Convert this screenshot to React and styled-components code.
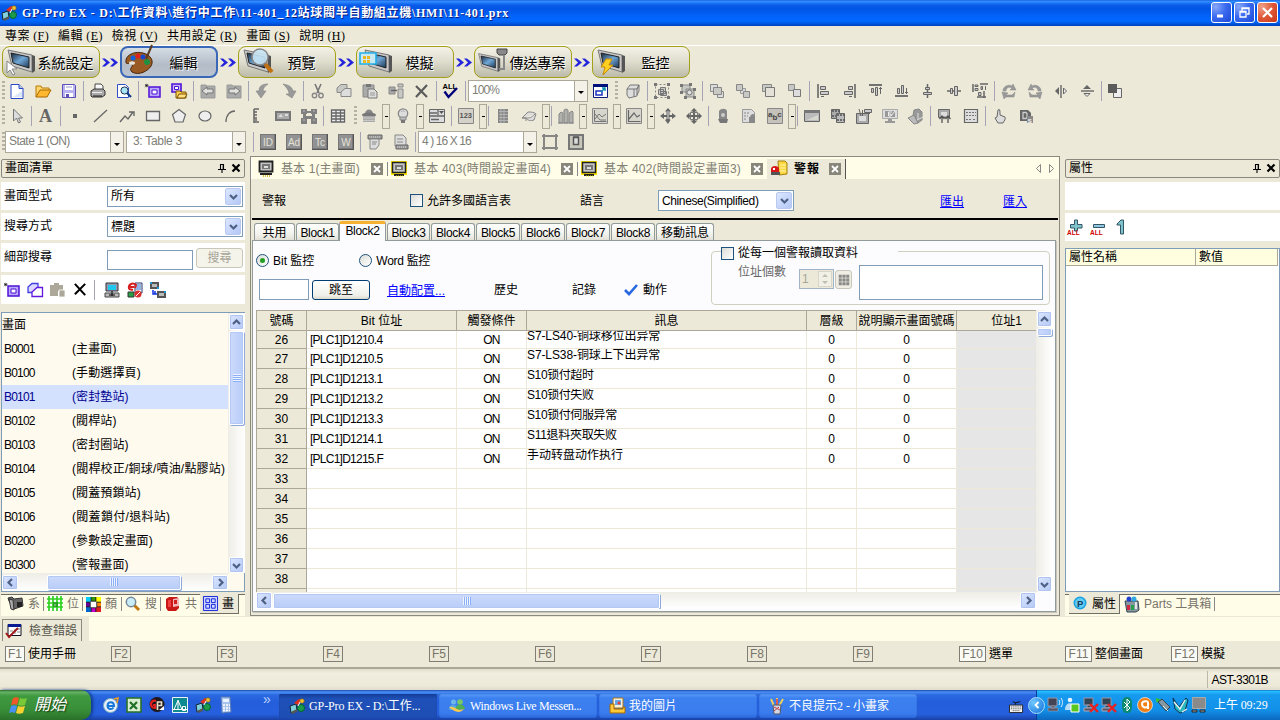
import React from "react";
import styled, { createGlobalStyle, css } from "styled-components";

const Global = createGlobalStyle`
  * { box-sizing: border-box; }
  body { margin: 0; overflow: hidden; }
`;
const sans = `"Liberation Sans", "Noto Sans CJK TC", sans-serif`;
const serif = `"Liberation Serif", "Noto Sans CJK TC", serif`;

const Screen = styled.div`
  width: 1280px; height: 720px; overflow: hidden; display: flex; flex-direction: column;
  background: #ece9d8; color: #000; font: 12px/14px ${sans}; white-space: nowrap;
`;
const Txt = styled.span`
  letter-spacing: ${p => p.$ls || 0}px;
  margin-left: ${p => p.$ml || 0}px;
  color: ${p => p.$c || "inherit"};
  font-weight: ${p => (p.$b ? 700 : 400)};
`;
const Svg = styled.svg`display: block; flex: none; overflow: visible;`;
const Spacer = styled.div`flex: ${p => (p.$w ? "none" : 1)}; width: ${p => p.$w || 0}px;`;

/* ---------- icon drawings, 16 x 16 ---------- */
const D = "#666", G = "#999", L = "#c8c8c4";
const hp = (
  <>
    <path d="M1 8l6-2 1 6-6 3z" fill="#7fd0d8" stroke="#123" />
    <path d="M2 14l6-3v3l-5 2z" fill="#555" />
    <path d="M5 5l5-4 3 1-4 5z" fill="#e03020" />
    <circle cx="12" cy="10" r="3.5" fill="#1d9a4a" stroke="#063" />
    <circle cx="13" cy="3" r="2.3" fill="#f0c030" stroke="#652" strokeWidth=".6" />
    <path d="M9 8l2-4" stroke="#fff" />
  </>
);
const badge = t => (
  <>
    <path d="M0 0h16v16H0z" fill="#777" /><path d="M1 1h13v13H1z" fill="#929292" />
    <path d="M0 15.5h16M15.5 0v16" stroke="#555" />
    <text x="8" y="12" fontSize="10" textAnchor="middle" fill="#e4e2d8" fontFamily="Liberation Sans">{t}</text>
  </>
);
const ICONS = {
  new: <><path d="M2 1.5h8l4 4v10H2z" fill="#fff" stroke="#2848c8" /><path d="M10 1.5v4h4" fill="#bcd" stroke="#2848c8" /><path d="M4 14h9V8z" fill="#dbe6fb" /></>,
  open: <><path d="M1 14V3h5l1 2h7v3" fill="#ffd76a" stroke="#b87808" /><path d="M1 14l4-7h11l-4 7z" fill="#ffb830" stroke="#a86800" /></>,
  save: <><path d="M1.5 1.5h12l1 1v12h-13z" fill="#b9b2f0" stroke="#5a50b8" /><path d="M4 2h8v5H4z" fill="#fff" /><path d="M4 10h8v4H4z" fill="#fff" /><path d="M5 11h3v3H5z" fill="#5a50b8" /><path d="M5 4h6" stroke="#99c" /></>,
  print: <><path d="M5 7V1h6l2 2v5" fill="#fff" stroke="#444" /><path d="M1 8l3-2h9l2 2v4l-3 2H2l-1-1z" fill="#aaa" stroke="#333" /><path d="M2 9.500h10M6 4h5" stroke="#eee" /><path d="M3 13h9" stroke="#222" /></>,
  preview: <><path d="M1.5 1.5h8l3 3v10h-11z" fill="#fff" stroke="#3050c8" /><circle cx="8.5" cy="7.5" r="3.6" fill="#a8e4f4" stroke="#235" /><path d="M11 10l4 4" stroke="#123a8a" strokeWidth="2.2" /></>,
  screen: <><path d="M4 4h11v10H4z" fill="#b8a8f8" stroke="#5010d8" strokeWidth="1.5" /><path d="M7 7h5v4H7z" fill="#fff" stroke="#5010d8" /><path d="M0 2.500h3.500M1.700.800v3.500M0 1l3 3M3.200 1L0 4.200" stroke="#111" strokeWidth=".6" /></>,
  screenopen: <><path d="M1 1h9v8H1z" fill="#c8b8f8" stroke="#5010d8" strokeWidth="1.600" /><path d="M3.500 3.500h4v3h-4z" fill="#fff" stroke="#5010d8" /><path d="M5 15V8h4l1 1h5v6z" fill="#ffcf50" stroke="#7a5200" /><path d="M6 15l2-4h8l-2 4z" fill="#ffdf80" stroke="#7a5200" /></>,
  prev: <><path d="M1 2h5l1 1h8v12H1z" fill="#aaa" stroke={G} /><path d="M2 8l5-4v2h6v4H7v2z" fill="#e0e0dc" stroke="#777" /></>,
  next: <><path d="M1 2h5l1 1h8v12H1z" fill="#aaa" stroke={G} /><path d="M14 8L9 4v2H3v4h6v2z" fill="#e0e0dc" stroke="#777" /></>,
  undo: <path d="M13 1C7 1 4 3 4 8H1l5 7 5-7H8c0-3 2-5 5-7z" fill={G} stroke="#858585" strokeWidth=".6" />,
  redo: <path d="M2 1c6 1 9 3 10 7h3l-4 7-6-4h3C8 7 5 4 2 1z" fill={G} stroke="#858585" strokeWidth=".6" />,
  cut: <><path d="M5 1l4 9M11 1L7 10" stroke="#777" strokeWidth="1.600" /><circle cx="4.500" cy="12.500" r="2.200" stroke="#888" strokeWidth="1.400" /><circle cx="11" cy="12.500" r="2.200" stroke="#888" strokeWidth="1.400" /></>,
  copy: <><path d="M5 1.500h6v8H1V5z" fill={L} stroke="#888" /><path d="M9 5.500h6v8H5V9z" fill="#ddd" stroke="#888" /></>,
  paste: <><path d="M1 2h11v12H1z" fill="#aaa" stroke="#888" /><path d="M4 1h5v3H4z" fill="#777" /><path d="M6 6h6l3 3v6H6z" fill="#ddd" stroke="#777" /><path d="M8 10h5M8 12h5" stroke="#999" /></>,
  move: <><path d="M1 4h6v7H1z" fill="#aaa" stroke="#888" /><path d="M10 6h5v9h-5zM10 1h5v3h-5z" fill={L} stroke="#888" /><path d="M3 7.500h6" stroke="#666" strokeWidth="1.500" /></>,
  x: <path d="M2 3l11 11M13 2L2 14" stroke="#5c5c5c" strokeWidth="2.200" />,
  xb: <path d="M2 2l11 12M13 2L2 13" stroke="#000" strokeWidth="2.200" />,
  allcheck: <><text x="-.5" y="5.500" fontSize="7.500" fontWeight="bold" fill="#000" fontFamily="Liberation Sans">ALL</text><path d="M1.500 8.500l4 5.500L14 5" stroke="#00007a" strokeWidth="2.400" /></>,
  window: <><path d="M.5 1.500h14v13H.5z" fill="#fff" stroke="#111a80" /><path d="M0 1h15v3H0z" fill="#00107a" /><path d="M3 8h6v4H3z" fill="#fff" stroke="#2030c0" strokeWidth="1.500" /><path d="M8 9l4-4M9 5h3v3" stroke="#1090b0" strokeWidth="1.500" /></>,
  cube: <path d="M2 6l3-4h9l-2 4v7l-8 2-2-3zM2 6h10M9 6v8M12 6l2-4v6l-2 4" fill="#ddd" stroke="#777" />,
  group: <><path d="M1.500 1.500h13v13h-13z" stroke="#888" strokeDasharray="2 2" /><path d="M4.500 6.500h5v5h-5zM6.500 4.500h5v6h-5zM6.500 8.500h6v4h-6z" fill={L} stroke="#777" /><path d="M0 0h3v3H0zM13 0h3v3h-3zM0 13h3v3H0zM13 13h3v3h-3z" fill="#777" /></>,
  ungroup: <><path d="M2 2h8v7H2zM6 6h8v8H6z" fill={L} stroke="#888" /><path d="M0 1h3v3H0zM9 0h3v3H9zM0 8h3v3H0zM13 5h3v3h-3zM4 13h3v3H4zM13 13h3v3h-3z" fill="#777" /><circle cx="9.500" cy="9.500" r="2.500" fill="#ddd" stroke="#777" /></>,
  front: <><path d="M1.500 1.500h7v7h-7z" fill="#ddd" stroke="#888" /><path d="M8.500 8.500h6v6h-6z" fill="#ddd" stroke="#888" /><path d="M4.500 4.500h8v7h-8z" fill={L} stroke="#888" /></>,
  forward: <><path d="M5.500 5.500h5v5h-5z" fill="#ddd" stroke="#999" /><path d="M1.500 1.500h6v6h-6zM8.500 8.500h6v6h-6z" fill={L} stroke="#888" /></>,
  backward: <><path d="M1.500 1.500h9v7h-9z" fill={L} stroke="#888" /><path d="M4.500 4.500h9v9h-9z" fill="#e4e2d8" stroke="#777" /></>,
  back: <><path d="M1.500 1.500h6v6h-6z" fill={L} stroke="#888" /><path d="M6.500 6.500h7v7h-7z" fill="#ddd" stroke="#777" /></>,
  alignL: <><path d="M2 1v14" stroke={D} strokeWidth="1.600" /><path d="M4.500 3.500h5v3h-5zM4.500 8.500h8v3h-8zM5 13.500h3" fill="#ccc" stroke={D} /></>,
  alignR: <><path d="M13 1v14" stroke={D} strokeWidth="1.600" /><path d="M6.500 3.500h4v3h-4zM2.500 8.500h8v3h-8zM7 13.500h3" fill="#ccc" stroke={D} /></>,
  alignT: <><path d="M1 2h13" stroke={D} strokeWidth="1.800" /><path d="M3.500 5.500h2v4h-2zM7.500 4.500h2v8h-2zM12.500 4v7M11 5.500h3" fill="#ccc" stroke={D} /></>,
  alignB: <><path d="M1 13h13" stroke={D} strokeWidth="1.800" /><path d="M3.500 5.500h2v5h-2zM7.500 2.500h2v8h-2zM12.500 5v6M11 9.500h3" fill="#ccc" stroke={D} /></>,
  alignC: <><path d="M7.500 1v14" stroke={D} strokeWidth="1.500" /><path d="M5.500 4.500h4v2h-4zM3.500 9.500h8v2h-8z" fill="#ccc" stroke={D} /></>,
  alignM: <><path d="M1 8h14" stroke={D} strokeWidth="1.500" /><path d="M4.500 5.500h2v5h-2zM8.500 3.500h3v9h-3z" fill="#ccc" stroke={D} /></>,
  alignA: <><path d="M1 1v8M8 1h8M5 14h9M12 8v7" stroke={D} strokeWidth="1.500" /><path d="M3 2h3v1.500H3zM3 5.500h3v2H3zM9 3.500h1.500v3H9zM13.500 3v4M6.500 9.500h2.500v3H6.500z" fill="#ccc" stroke={D} /></>,
  rotR: <path d="M2 8c0-5 6-7 9-5l1-2 3 6h-6l2-2C8 3 5 5 5 8zM1 9l6 1-2 2h6l3-3-1 5H5l-2 2z" fill={G} stroke="#888" strokeWidth=".5" />,
  rotL: <path d="M14 8c0-5-6-7-9-5L4 1 1 7h6L5 5c3-2 6 0 6 3zM15 9l-6 1 2 2H5L2 9l1 5h8l2 2z" fill={G} stroke="#888" strokeWidth=".5" />,
  flipH: <><path d="M6 4v8L2 8z" fill={D} /><path d="M8 2v13" stroke={D} strokeWidth="1.400" /><path d="M10.500 5v6l3-3z" fill="#eee" stroke={D} /></>,
  flipV: <><path d="M4 6h8L8 2z" fill={D} /><path d="M2 8h13" stroke={D} strokeWidth="1.400" /><path d="M5 10.500h6l-3 3z" fill="#eee" stroke={D} /></>,
  swap: <><path d="M5.500 5.500h8v9h-8z" fill="#eee" stroke={D} /><path d="M0 1h9v9H0z" fill="#5c5c5c" /></>,
  arrow: <path d="M4.500 1v12l3-3 2 5 2-1-2-4h4z" fill="#ddd" stroke="#777" />,
  A: <text x="1" y="14" fontSize="18" fontWeight="bold" fill={D} fontFamily="Liberation Serif">A</text>,
  dot: <path d="M6 6h4v4H6z" fill={D} />,
  line: <path d="M1 14L14 2" stroke={D} strokeWidth="1.300" />,
  poly: <path d="M1 14l5-6 3 3 5-7M10 4h5v4" stroke={D} strokeWidth="1.400" />,
  rect: <path d="M1.500 3.500h13v9h-13z" fill="#eee" stroke={D} strokeWidth="1.300" />,
  pent: <path d="M8 1.500l6.500 5L12 14H4L1.500 6.500z" fill="#eee" stroke={D} strokeWidth="1.200" />,
  ell: <ellipse cx="8" cy="8" rx="6" ry="5" fill="#eee" stroke={D} strokeWidth="1.200" />,
  arc: <path d="M3 14C3 7 7 3 12 3" stroke={D} strokeWidth="1.300" />,
  scale: <path d="M5 1v14M5 1h5M5 4h3M5 7h3M5 10h3M5 14h5M6 12h2" stroke={D} strokeWidth="1.500" />,
  image: <><path d="M0 3h16v10H0z" fill="#777" /><path d="M2 5h12v6H2z" fill="#aaa" /><path d="M3 9l3-3 2 3zM10 6h3v2h-3z" fill="#ddd" /></>,
  layout: <><path d="M0 1h6v5H0zM10 1h6v5h-6zM0 10h6v6H0zM10 10h6v6h-6zM6 3h4v2H6zM2 6h3v4H2zM11 6h3v4h-3zM5 8h6v3H5z" fill="#808080" /><path d="M2 3h2M12 3h2M2 12h2M12 12h2" stroke="#bbb" /></>,
  table: <path d="M1.500 2h13v12h-13zM1.500 5h13M1.500 8h13M1.500 11h13M6 2v12M10.500 2v12" fill="#eee" stroke={D} strokeWidth="1.300" />,
  lamp: <><path d="M4 6c0-6 8-6 8 0z" fill="#888" /><ellipse cx="8" cy="7" rx="7" ry="2.500" fill="#777" /><path d="M2 8h12v6H2z" fill="#aaa" /><path d="M2 10h12M2 12.500h12" stroke={L} /></>,
  bulb: <><circle cx="8" cy="5.500" r="4.700" fill="#ddd" stroke="#888" strokeWidth="1.300" /><path d="M5 9h6v3H5z" fill="#bbb" stroke="#888" /><path d="M6 12h4v3H6z" fill="#777" /><path d="M6 4c2-2 3-1 4 0" stroke="#aaa" /></>,
  panel: <><path d="M.5 1.500h15v13H.5z" fill="#ddd" stroke={D} /><path d="M0 8h16M0 5h8M2 11.500h8M9 2v5" stroke={D} strokeWidth="1.300" /><path d="M10 3h5l-2.500 3z" fill="#555" /></>,
  n123: <><path d="M.5.500h15v15H.5z" fill="#d4d2c8" stroke="#888" /><text x="1.500" y="9.500" fontSize="7.500" fontWeight="bold" fill="#555" fontFamily="Liberation Sans">123</text></>,
  keypad: <><path d="M3 1h10v14H3z" fill="#888" /><path d="M4 3.500h9M4 6.500h9M4 9.500h9M4 12.500h9M6 1v14M9 1v14" stroke="#bbb" strokeWidth=".8" /></>,
  shape3: <path d="M1 10l6-6c3 0 6 0 8 2l-2 6c-3 1-6 1-8-2zM1 10h4c4 0 5 0 9-4M5 10v3" fill="#ddd" stroke="#888" />,
  bars: <><path d="M1 6l2-2 2 1v10H1zM6 2l2-1 2 1v13H6zM11 5l3-2 1 1v11h-4z" fill="#b0b0ac" stroke="#888" /><path d="M0 15h16" stroke="#888" /></>,
  graph: <><path d="M.5.500h15v15H.5z" fill="#d8d6cc" stroke="#888" /><path d="M2.500 2v11.500h12M3 11l4-5 3 3 4-3M3 6l5 6h6" stroke="#777" /></>,
  graph2: <><path d="M.5.500h15v15H.5z" fill="#d8d6cc" stroke="#888" /><path d="M2.500 2v11.500h12M3 11l5-6 3 4 3-2" stroke={D} strokeWidth="1.200" /></>,
  dia1: <><path d="M8 0l3 3.500H9.500V7H12V5l4 3-4 3V9H9.500v2l1 1L8 16l-3-4 1.500-1V9H4v2L0 8l4-3v2h2.500V3.500H5z" fill={D} /><path d="M8 3v8" stroke="#ddd" /></>,
  dia2: <><path d="M8 0l3.500 3.500H9V7h3.500V4.500L16 8l-3.500 3.500V9H9v3.500h2.500L8 16l-3.500-3.500H7V9H3.500v2.500L0 8l3.500-3.500V7H7V3.500H4.500z" fill={D} /><path d="M4.500 4.500h7v7h-7z" stroke="#777" /></>,
  alarm: <><path d="M4 3c2-3 7-3 8 0v8H4z" fill="#888" /><circle cx="8" cy="7" r="2" fill="#ccc" /><path d="M3 11h10l-1 4H5z" fill="#777" /></>,
  doc: <><path d="M1.500 1.500h9l3 3v10h-12z" fill="#ddd" stroke="#999" /><path d="M3 5h6M3 8h4M3 11h3" stroke="#888" strokeDasharray="2 1" /><path d="M9 9c1-4 5-4 5 0v6H8V9z" fill="#888" /></>,
  abc: <><path d="M.5.500h15v15H.5z" fill="#c4c2ba" stroke="#888" /><text x="1" y="8.500" fontSize="8" fontWeight="bold" fill="#444" fontFamily="Liberation Sans">a<tspan dy="3">b</tspan><tspan dy="-3">c</tspan></text></>,
  win2: <><path d="M.5 2.500h15v11H.5z" fill="#bbb" stroke={D} /><path d="M0 2h16v3H0z" fill="#777" /><path d="M3 12h11V7z" fill="#d8d8d0" /></>,
  film: <><path d="M1.500 1.500h8v9h-8z" fill="#aaa" stroke={D} /><path d="M6.500 5.500h8v9h-8z" fill="#bbb" stroke={D} /><path d="M2 3h8M2 8h4M7 7h8M7 12h8" stroke="#555" strokeDasharray="2 1" strokeWidth="1.500" /></>,
  grp: <><path d="M.5 5.500h12v10H.5z" fill="#aaa" stroke={D} /><path d="M3 8h7v5H3z" fill="#ddd" /><path d="M3 1l2 7M8.500 1.500h7v3h-7zM6 5.500h8M6.500 2v6" fill="#ccc" stroke={D} /></>,
  monitor: <><path d="M.5 1.500h15v9H.5z" fill="#ddd" stroke="#aaa" /><path d="M3 3h10v6H3z" fill="#999" /><path d="M10 4H6.500v4H9V6H7M13 3L9 8" stroke="#eee" /><path d="M6 11h4v2H6zM3 13h10v2H3z" fill="#999" /></>,
  box3: <><path d="M6 2l5-1 3 3v8l-4 3-6-2z" fill="#999" stroke="#888" /><path d="M0 10l6-3 4 8-4 1z" fill="#bbb" stroke="#888" /><path d="M10 5v6M9 12l6-3" stroke="#ddd" /></>,
  send: <><path d="M1.500 1.500h11v8h-11z" fill="#aaa" stroke={D} /><path d="M4 4h6v4H4z" fill="#ddd" /><path d="M5 15V8M11 15V8M2.500 11L5 8l2.500 3M8.500 11L11 8l2.500 3" stroke="#555" strokeWidth="1.300" /></>,
  text: <><path d="M1.500 1.500h13v13h-13z" fill="#ddd" stroke={D} strokeWidth="1.200" /><path d="M3 4.500h10M3 7.500h10M3 11.500h6M10 11.500h3" stroke="#777" strokeDasharray="2 1" strokeWidth="1.200" /></>,
  hand: <path d="M6 2c2-2 2 1 2 5l5 2c1 2-1 4-2 6H6L3 10l2-1z" fill="#ddd" stroke={D} />,
  ds: <><path d="M2 2h8l3 3v8H2z" fill="#666" /><path d="M5 4.500h3l1 1v4l-1 1H5z" stroke="#ccc" strokeWidth="1.300" /><path d="M9 8h6v7H9z" fill="#888" /><text x="9.500" y="14.500" fontSize="8" fontWeight="bold" fill="#eee" fontFamily="Liberation Sans">s</text></>,
  id: badge("ID"), ad: badge("Ad"), tc: badge("Tc"), w: badge("W"),
  fmt1: <><path d="M1 1h14v4H1z" fill="#999" stroke={D} /><path d="M2 3h12" stroke="#ddd" strokeDasharray="1 1" /><path d="M3 5h9v6l-3 4H3zM5 8h5M5 10h4" fill="#ddd" stroke="#888" /></>,
  fmt2: <><path d="M2 1h8l3 3v8H2zM4 5h6M4 8h6" fill="#ddd" stroke="#888" /><path d="M3 11h12v4H3z" fill="#999" stroke={D} /><path d="M4 13h10" stroke="#ddd" strokeDasharray="1 1" /></>,
  frame: <><path d="M0 2h16M0 14h16M2 0v16M14 0v16" stroke={D} strokeWidth="1.500" /><path d="M1 1h2v2H1zM13 1h2v2h-2zM1 13h2v2H1zM13 13h2v2h-2z" fill="#888" /></>,
  frame2: <><path d="M0 0h16v16H0z" fill="#777" /><path d="M2 2h3v12H2zM2 11h12v3H2zM11 2h3v10h-3z" fill="#c9c7bc" /><path d="M5.500 3.500h5v7h-5z" fill="#ddd" stroke="#555" strokeWidth="1.500" /></>,
  copyb: <><path d="M5 1.500h6v9H1V5z" fill="#dcd8ff" stroke="#4040e0" strokeWidth="1.300" /><path d="M10 5.500h5.500v9H5V10z" fill="#fff" stroke="#6018e0" strokeWidth="1.300" /></>,
  pasteg: <><path d="M0 3h4V1h5v2h4v6H8v5H0z" fill="#aca899" /><path d="M9 8h6v7H9z" fill="#aca899" stroke="#fff" strokeWidth=".8" /></>,
  pc: <><path d="M2 1h12v8H2z" fill="#99a" stroke="#334" /><path d="M4 3h8v5H4z" fill="#20c8f0" /><path d="M1 11h14v4H1z" fill="#bbb" stroke="#444" /><path d="M8 9v5M5 13h6" stroke="#000" /></>,
  recipe: <><path d="M8 1h7v10H8z" fill="#fff" stroke="#236" /><path d="M9 3h5M9 5h5M9 7h5" stroke="#26c" /><path d="M2 7c-1-5 4-7 7-4L8 6M2 7l4 1M1 5h6" stroke="#d82020" strokeWidth="2" /><path d="M1 10h6v5H1z" fill="#28a048" stroke="#333" /><circle cx="11" cy="12" r="3.500" fill="#d83030" /><path d="M9 14l4-4" stroke="#fff" /></>,
  link: <><path d="M0 0h9v7H0z" fill="#555" /><path d="M2 2h5v3H2z" fill="#bbb" /><path d="M7 9h9v7H7z" fill="#555" /><path d="M9 11h5v3H9z" fill="#bbb" /><path d="M3 8v4h4M5 9v3" stroke="#1030e0" strokeWidth="1.500" /><path d="M0 0h2v2H0zM7 5h2v2H7zM14 9h2v2h-2z" fill="#2098d8" /></>,
  camera: <><path d="M0 2l4-1 2 2 8-1 1 8-9 3-5-8z" fill="#666" stroke="#333" /><path d="M1 3l4 1 1 10-3-1z" fill="#aaa" stroke="#333" /><path d="M9 6h5v5H9z" fill="#222" /></>,
  gridg: <><path d="M0 0h16v15H0z" fill="#fff" /><path d="M2 0v15M6 0v15M10 0v15M14 0v15M0 3h16M0 7h16M0 11h16" stroke="#30d020" strokeWidth="1.700" /><path d="M6 6h5v5H6z" fill="#108010" opacity=".6" /></>,
  colors: <><path d="M0 0h16v16H0z" fill="#222" /><path d="M0 0h5v5H0z" fill="#0cf" /><path d="M6 0h4v4H6z" fill="#390" /><path d="M11 0h5v5h-5z" fill="#ff0" /><path d="M0 6h4v4H0z" fill="#609" /><path d="M5 5h6v6H5z" fill="#fff" /><path d="M12 6h4v4h-4z" fill="#f80" /><path d="M0 11h5v5H0z" fill="#06c" /><path d="M6 12h4v4H6z" fill="#c0c" /><path d="M11 11h5v5h-5z" fill="#e02020" /></>,
  search: <><path d="M9 9l5 5" stroke="#c07810" strokeWidth="3" /><circle cx="6" cy="6" r="4.700" fill="#c8ecf8" stroke="#789" strokeWidth="1.500" /></>,
  redbox: <><path d="M1 3l3-2h8l2 2v9l-3 3H3l-2-3z" fill="#c81818" /><path d="M8 3l6-1v8l-6 1z" fill="#f4b8b8" /><path d="M3 4h3v7H3z" fill="#f04040" /><path d="M9 4h3v4H9z" fill="#d02020" /></>,
  tiles: <><path d="M.5.500h15v15H.5z" fill="#d0d8ff" stroke="#1020d8" /><path d="M3 3h4v4H3zM9 3h4v4H9zM3 9h4v4H3zM9 9h4v4H9z" stroke="#1020d8" /></>,
  chk: <><path d="M2 1.500h13v11H2z" fill="#fff" stroke="#112" /><path d="M2 1h13v3H2z" fill="#0a1a90" /><path d="M4 8h3M9 6v5M11 6h3M11 9h3" stroke="#888" /><path d="M0 10l3 4 9-9" stroke="#a01818" strokeWidth="1.900" /></>,
  disp: <><path d="M0 0h16v14H0z" fill="#ffe800" /><path d="M1.500 1.500h13v10h-13z" fill="#c4c4c4" stroke="#222" strokeWidth="1.500" /><path d="M4 4h8v5H4z" fill="#777" /><path d="M6 6h4v2H6z" fill="#ddd" /><path d="M3 14h10" stroke="#222" strokeWidth="2" /><path d="M5 15h7" stroke="#ffe800" strokeDasharray="1 1" /></>,
  dispg: <><path d="M1.500.500h13v10h-13z" fill="#c4c4c4" stroke="#222" strokeWidth="1.800" /><path d="M4 3h8v5H4z" fill="#777" /><path d="M6 5h4v2H6z" fill="#ddd" /><path d="M2 13h12" stroke="#222" strokeWidth="2" /><path d="M5 15h7" stroke="#d8a810" strokeDasharray="1 1" strokeWidth="1.500" /></>,
  alarmc: <><path d="M7 0h7l2 2v11l-8 1z" fill="#ffd840" stroke="#a08010" /><path d="M9 4h6M9 7h6M9 10h6" stroke="#fff4b0" /><path d="M0 8c0-4 8-4 8 0v3H0z" fill="#d81818" /><path d="M0 11h9v3H0z" fill="#555" /><path d="M2 7h2v2H2z" fill="#fff" /></>,
  plus: <><path d="M7.500 1h3v4.500H15V9h-4.500v3h-3V9H3.500V5.500h4z" fill="#7fc4cc" stroke="#356" /><text x="0" y="15.500" fontSize="6.500" fontWeight="bold" fill="#d00000" fontFamily="Liberation Sans">ALL</text></>,
  minus: <><path d="M3.500 5.500h11v3h-11z" fill="#8fc8e0" stroke="#356" /><text x="0" y="15.500" fontSize="6.500" fontWeight="bold" fill="#d00000" fontFamily="Liberation Sans">ALL</text></>,
  one: <path d="M4 5l4-4h2.500v14h-3V6H4z" fill="#7fc4cc" stroke="#356" />,
  prop: <><circle cx="7" cy="7" r="6.500" fill="#18a0e0" /><circle cx="7" cy="7" r="5" fill="#60ccf4" /><text x="4" y="10.500" fontSize="9.500" fontWeight="bold" fill="#1a4060" fontFamily="Liberation Sans">P</text><text x="3.500" y="10" fontSize="9.500" fontWeight="bold" fill="#ffffc8" aria-hidden="true" fontFamily="Liberation Sans" /></>,
  parts: <><path d="M1 5h13l1 9-3 2H3z" fill="#8898a0" stroke="#345" /><circle cx="5" cy="3" r="2.500" fill="#2040d0" /><circle cx="10" cy="3" r="2.500" fill="#30a8e0" /><path d="M3 9h3v5H3z" fill="#d02840" /><path d="M7 9h3v5H7z" fill="#28a050" /><path d="M12 6v7" stroke="#fff" strokeWidth="1.500" /></>,
  hp,
  ie: <><circle cx="7.500" cy="8.500" r="7" fill="#e8f0fa" stroke="#7ab" /><path d="M4 9h7c0-5-6-5-6.500-.5 0 4 4 4.500 6 2" stroke="#1878d8" strokeWidth="2" /><path d="M11 2l4-1-1 5" stroke="#f0a020" strokeWidth="1.600" /></>,
  excel: <><path d="M1 1h14v14H1z" fill="#d8ecd0" stroke="#287028" strokeWidth="1.600" /><path d="M4 5l7 7M11 5l-7 7" stroke="#207028" strokeWidth="2.200" /></>,
  gp: <><circle cx="8" cy="7.500" r="7.500" fill="#201818" /><path d="M7 4C1 2 0 11 6 11V8H4" stroke="#e02020" strokeWidth="2.200" /><path d="M8.500 13V5h4v3.500h-3" stroke="#e8e0c8" strokeWidth="1.700" /><path d="M10 13l5-4v4z" fill="#fff" /></>,
  cad: <><path d="M.5.500h15v15H.5z" fill="#0d8a90" stroke="#e8f4f4" /><path d="M2 12.500l4-9 4 9zM6 3v9M10.500 9.500h3v4h-3zM1 12.500h14" stroke="#fff" /></>,
  calc: <><path d="M3 0h9l1 15-9 1z" fill="#a8c4ec" stroke="#5878b8" /><path d="M5 2h6v3H5z" fill="#e8f4ff" /><path d="M5 8h7M5 11h7M5 13.500h7" stroke="#fff" strokeDasharray="2 1" strokeWidth="1.500" /></>,
  msn: <><circle cx="4.500" cy="4" r="2.500" fill="#70b8e8" /><circle cx="11" cy="4" r="2.800" fill="#78c868" /><path d="M0 12c0-7 8-7 9 0z" fill="#58a8e0" /><path d="M6 12c1-7 9-7 10-1z" fill="#50b050" /><path d="M0 9c6-2 8 5 15 2-4 5-10 3-15-2z" fill="#f8c850" /></>,
  pics: <><path d="M4 0h10v10H4z" fill="#f8f0d8" stroke="#a07820" /><path d="M6 2h6v5H6z" fill="#68a8e8" /><path d="M1 6h4v5h9V9h2v6H1z" fill="#ffc838" stroke="#a06808" /><circle cx="10" cy="5" r="1.500" fill="#e04030" /></>,
  paint: <><path d="M5 8L2 1M8 8V0M10 8l4-7" stroke="#e8d060" strokeWidth="2" /><path d="M8 8V1" stroke="#e04040" strokeWidth="1.600" /><path d="M4 7h8l-1 9H5z" fill="#d0d8e8" stroke="#556" /><path d="M5 9l6 3M5 13l5-4" stroke="#c84040" /></>,
  kbd: <><path d="M.5 7.500h14v8H.5z" fill="#f4f4f4" stroke="#222" /><path d="M2 9.500h11M2 11.500h11M4 13.500h7" stroke="#333" strokeDasharray="1 1" /><path d="M7 7V5L4 4M7 5l5-1" stroke="#111" /></>,
  net: <><path d="M1 1h9v8H1z" fill="#445" stroke="#99a" /><path d="M4 9h4v2H4zM1 11h10v3H1z" fill="#556" stroke="#aab" strokeWidth=".5" /><path d="M12 3c1 2 1 3 0 5M14 1c2 3 2 6 0 9" stroke="#e8f4ff" /></>,
  user: <><circle cx="5" cy="3" r="2.300" fill="#eaf6ff" /><path d="M0 13c0-9 9-9 10 0z" fill="#b8ddf4" /><path d="M6 7h8v8H6z" fill="#58c820" stroke="#fff" /></>,
  netx: <><path d="M1 1h9v7H1zM4 8h4v3H4z" fill="#345" stroke="#99a" /><path d="M1 11h9v3H1z" fill="#556" stroke="#aab" /><path d="M7 7l8 8M15 7l-8 8" stroke="#e82020" strokeWidth="2.400" /></>,
  bt: <><path d="M8 0c4 0 5 3 5 8s-1 8-5 8-5-3-5-8 1-8 5-8z" fill="#0a8a70" /><path d="M5 5l6 6-3 3V2l3 3-6 6" stroke="#fff" /></>,
  avast: <><circle cx="8" cy="8" r="7.500" fill="#f08018" stroke="#fff" strokeWidth=".6" /><path d="M11 12V6c0-3-6-2-6 1s4 5 6 2" stroke="#fff" strokeWidth="2" /></>,
  usb: <><path d="M1 1l6 2-1 3-5-1z" fill="#38c038" /><path d="M3 5l4-3 8 8-4 4z" fill="#8898a0" stroke="#345" /><path d="M8 9l5 5" stroke="#dfe" /></>,
  bird: <><path d="M0 1l6 9L13 1l2 2-3 11-5 2-5-4z" fill="#28b8c0" stroke="#135" /><path d="M1 5l6 7L12 3M14 12l-5 3" stroke="#eee" strokeWidth="1.300" /></>,
  mon2: <><path d="M1.500.500h13v11h-13z" fill="#8a8a8a" stroke="#aaa" /><path d="M1 13h5v2H1zM9 13h5v2H9z" fill="#999" stroke="#111" strokeWidth=".8" /></>,
  grid: <><path d="M1 1h14v14H1z" fill="#888" /><path d="M1 5.500h14M1 10.500h14M5.500 1v14M10.500 1v14" stroke="#e4e2d8" /></>,
};
const Icon = ({ n, s = 16 }) => (
  <Svg width={s} height={s} viewBox="0 0 16 16" fill="none">{ICONS[n]}</Svg>
);

/* ---------- title bar / menu ---------- */
const TitleBar = styled.header`
  height: 26px; flex: none; display: flex; align-items: center; padding: 0 2px 1px 1px; color: #fff;
  font: bold 12px/16px ${serif}; text-shadow: 1px 1px #0a1c80;
  background: linear-gradient(#0a50d8 0, #3a92ff 1px, #2a86ff 2px, #0a5ce8 5px, #0055e5 9px, #0262fa 16px, #0068ff 21px, #0054dc 24px, #0040b8 26px);
`;
const WinBtn = styled.div`
  width: 21px; height: 21px; margin-left: 2px; border: 1px solid #fff; border-radius: 3px;
  display: grid; place-items: center;
  background: ${p => p.$red ? "radial-gradient(circle at 20% 20%, #f0a088, #e05838 50%, #c83818)" : "radial-gradient(circle at 20% 20%, #8aa8f8, #3c6cf0 45%, #1c48d8)"};
`;
const MenuBar = styled.nav`
  height: 20px; flex: none; display: flex; align-items: center; padding-left: 5px; gap: 9px;
  border-bottom: 1px solid #fff; font-family: ${serif}; letter-spacing: .4px;
`;
const menus = [["專案", "F"], ["編輯", "E"], ["檢視", "V"], ["共用設定", "R"], ["畫面", "S"], ["說明", "H"]];

/* ---------- mode buttons ---------- */
const ModeBar = styled.div`height: 32px; flex: none; display: flex; align-items: center; padding-left: 2px;`;
const ModeButton = styled.div`
  width: 98px; height: 32px; display: flex; align-items: center; padding-left: 3px;
  border: ${p => (p.$on ? "2px solid #3a68b8" : "1px solid #a4a018")}; border-radius: 8px;
  background: ${p => p.$on ? "linear-gradient(#d4dce4, #b4bcc8 60%, #bcc4d0)" : "linear-gradient(#f4f2e8, #dedccc 50%, #bcbaa8)"};
`;
const ModeLabel = styled.div`flex: 1; text-align: center; font-size: 14px; line-height: 18px; text-shadow: 1px 1px #fff; padding: 2px 3px 0 0; margin-left: -2px;`;
const Chevrons = styled.div`width: 20px; display: grid; place-items: center;`;
const device = (
  <>
    <path d="M2 2l24 5v17L6 18z" fill="#c8c8c8" stroke="#777" /><path d="M26 7l3 1v15l-3 2z" fill="#555" />
    <path d="M5 5l18 4v11L7 15z" fill="url(#glass)" stroke="#222" />
  </>
);
const MODE_ART = {
  sys: <>{device}<path d="M1 13v12l3-3 3 5 2-1-3-5h5z" fill="#fff" stroke="#888" /></>,
  edit: <><path d="M1 12C2 6 11 3 18 5c8 2 11 8 8 13S14 28 7 24c-4-4 2-5 0-8-3-2-7 2-6-4z" fill="#9a5a24" stroke="#4a2408" /><circle cx="8" cy="10" r="2.500" fill="#1060e0" /><circle cx="13" cy="8" r="2.500" fill="#e02020" /><circle cx="18" cy="9" r="2.500" fill="#1848d0" /><circle cx="22" cy="14" r="3" fill="#209040" /><path d="M21 11l6-14" stroke="#5a3a20" strokeWidth="2" /><ellipse cx="7" cy="15" rx="3" ry="1.800" fill="#e8e4d8" /></>,
  view: <>{device}<path d="M23 16l7 8" stroke="#c07010" strokeWidth="4" /><circle cx="18" cy="9" r="8" fill="#c8e4f4" fillOpacity=".9" stroke="#888" strokeWidth="1.500" /></>,
  sim: <><g transform="translate(3 0)">{device}</g><path d="M0 5h16v11H0z" fill="#c8e8f4" stroke="#20b0e8" strokeWidth="1.600" /><path d="M3 8h3v3H3zM7 8h3v3H7zM3 12h3v3H3zM7 12h3v3H7z" fill="#f0b820" /></>,
  send: <><g transform="translate(-1 4) scale(.8)">{device}</g><path d="M19 1h10v4l-2 2h-6l-2-2z" fill="#888" stroke="#444" /><path d="M26 7v14h-5" stroke="#888" strokeWidth="2" /></>,
  mon: <>{device}<path d="M10 11h6l-3 6h4L7 27l2-8H5z" fill="#ffd020" stroke="#c88808" /></>,
};
const modes = [["sys", "系統設定"], ["edit", "編輯", 1], ["view", "預覽"], ["sim", "模擬"], ["send", "傳送專案"], ["mon", "監控"]];

/* ---------- tool rows ---------- */
const ToolRow = styled.div`height: ${p => p.$h || 26}px; flex: none; display: flex; align-items: center; padding-left: 2px;`;
const Tool = styled.div`margin-left: 10px;`;
const Grip = styled.div`width: 3px; height: 20px; background: repeating-linear-gradient(#b4b1a4 0 2px, #ece9d8 2px 4px); & + ${Tool} { margin-left: ${p => p.$a || 4}px; }`;
const Sep = styled.div`width: 1px; height: 20px; margin-left: 6px; background: #a6a4b4; & + ${Tool} { margin-left: 6px; }`;
const Drop = styled.div`
  width: 8px; height: 25px; margin-left: 5px; border: 1px solid #aca899; display: grid; place-items: center;
  &::after { content: ""; width: 3px; height: 1px; background: #000; border-bottom: 0; }
  & + ${Tool} { margin-left: 5px; } & + ${Sep} { margin-left: 1px; }
`;
const Combo = styled.div`
  width: ${p => p.$w}px; height: 22px; margin-left: ${p => p.$ml || 0}px; display: flex; justify-content: space-between; align-items: stretch;
  border: 1px solid #aca899; background: #fff; color: #808078; line-height: 19px; padding-left: 3px;
  & + ${Tool} { margin-left: 5px; }
`;
const ComboArrow = styled.div`
  width: 13px; background: #f4f2e8; border-left: 1px solid #aca899; display: grid; place-items: center;
  &::after { content: ""; border: 3px solid transparent; border-top-color: #000; border-bottom: 0; margin-top: 4px; }
`;
const tools = s => s.split(" ").map((t, i) =>
  t === "|" ? <Sep key={i} /> : t === "v" ? <Drop key={i} /> : <Tool key={i}><Icon n={t} /></Tool>);

/* ---------- docks ---------- */
const Main = styled.main`height: 462px; flex: none; display: flex;`;
const Dock = styled.aside`width: ${p => p.$w}px; padding: ${p => p.$p}; display: flex; flex-direction: column;`;
const DockHead = styled.div`
  height: 19px; flex: none; border: 1px solid #8a887c; border-radius: 2px; display: flex; align-items: center; padding: 0 4px 1px 3px; margin-bottom: 4px;
`;
const WhiteBar = styled.div`height: ${p => p.$h}px; flex: none; margin-bottom: 3px; background: #fff; display: flex; align-items: center; padding-left: ${p => p.$pl ?? 4}px;`;
const FieldLabel = styled.div`width: 102px; padding-bottom: 1px; margin-left: -1px; margin-right: 1px;`;
const Select = styled.div`
  width: ${p => p.$w}px; height: 21px; background: #fff; border: 1px solid #7f9db9; display: flex; align-items: center; justify-content: space-between; padding: 1px 1px 1px 3px;
`;
const Btn = styled.div`
  display: grid; place-items: center; width: ${p => p.$w || 16}px; height: ${p => p.$h || 17}px; flex: none; border-radius: 2px;
  background: linear-gradient(135deg, #dce6ff, #b4c8f6); border: 1px solid ${p => (p.$out ? "#fff" : "#b8c8f0")}; box-shadow: ${p => (p.$out ? "inset 0 0 0 1px #b0c4f0" : "none")};
`;
const Arrow = ({ r = 0 }) => (
  <Svg width="9" height="9" viewBox="0 0 9 9"><path d="M1 3l3.500 3.500L8 3" transform={`rotate(${r} 4.500 4.500)`} fill="none" stroke="#4d6185" strokeWidth="2.200" /></Svg>
);
const Input = styled.div`width: ${p => p.$w}px; height: ${p => p.$h || 21}px; flex: none; border: 1px solid #7f9db9; background: #fff; margin-top: ${p => p.$mt || 0}px;`;
const GrayBtn = styled.div`
  width: 47px; height: 20px; margin-left: 3px; border: 1px solid #c9c7ba; border-radius: 3px; background: #f5f4ea; color: #a6a498; display: grid; place-items: center; font-size: 12px;
`;
const ListBox = styled.div`height: 280px; flex: none; margin-top: 5px; border: 1px solid #7f9db9; background: #fffaee; display: grid; grid-template: 260px 18px / 226px 17px;`;
const ListRows = styled.div`overflow: hidden;`;
const ListRow = styled.div`
  height: 24px; display: flex; align-items: center; padding-left: 2px;
  ${p => p.$on && css`background: #d3e1ff; color: #000090;`}
`;
const Code = styled.div`width: 68px; letter-spacing: -.8px;`;
const VBar = styled.div`width: 17px; background: linear-gradient(90deg, #eeede6, #fff); display: flex; flex-direction: column; align-items: center; padding-top: 1px; justify-content: space-between;`;
const HBar = styled.div`background: linear-gradient(#eeede6, #fff); display: flex; align-items: center; justify-content: space-between; overflow: hidden;`;
const Thumb = styled.div`
  flex: none; width: ${p => p.$w}px; height: ${p => p.$h}px; margin: ${p => p.$m || 0}; border: 1px solid #fff; border-radius: 2px; display: grid; place-items: center;
  background: linear-gradient(${p => (p.$v ? "90deg" : "180deg")}, #cddafc, #b8cdf8); box-shadow: inset 0 0 0 1px #b4c8f4, 1px 1px #8ea8dc;
  &::after { content: ""; width: 8px; height: 8px; background: repeating-linear-gradient(${p => (p.$v ? "180deg" : "90deg")}, #eef4ff 0 1px, #8cb0f8 1px 2px); display: ${p => (p.$plain ? "none" : "block")}; }
`;
const DockTabs = styled.div`height: 22px; flex: none; display: flex; align-items: stretch; background: #fffce8; border-top: 1px solid #716f64; margin-top: 2px;`;
const DockTab = styled.div`
  display: flex; align-items: center; padding: 0 0 3px ${p => p.$pl || 0}px; width: ${p => p.$w}px; flex: none; color: #77756a; gap: ${p => p.$g || 4}px;
  ${p => p.$on && css`background: #ece9d8; color: #000; border: solid #716f64; border-width: 0 1px 1px 0; margin-top: -1px; height: 20px; padding-bottom: 0;`}
`;
const TabLine = styled.div`width: 1px; height: 14px; background: #888; margin-top: 2px;`;
const Pin = () => (
  <Svg width="8" height="9" viewBox="0 0 8 9"><path d="M0 5.500h8M2.500 5V.5h3V5M5.200.5v5M4 5.500V9" fill="none" stroke="#000" strokeWidth="1.100" /></Svg>
);
const Close = () => (<Svg width="8" height="8" viewBox="0 0 8 8"><path d="M.5.500l7 7M7.500.500l-7 7" stroke="#000" strokeWidth="2.200" /></Svg>);
const DockTools = styled.div`display: flex; align-items: center; gap: ${p => p.$g}px;`;

/* ---------- centre ---------- */
const Center = styled.section`width: 810px; height: 460px; margin: 1px 4px 0 4px; border: 1px solid #8c8a7e; display: flex; flex-direction: column; flex: none;`;
const DocTabs = styled.div`height: 22px; flex: none; background: #fffce8; display: flex; align-items: center; border-left: 1px solid #fff; color: #808074;`;
const DocTab = styled.div`
  width: ${p => p.$w}px; height: 20px; align-self: flex-end; display: flex; align-items: center; padding-left: ${p => (p.$on ? 4 : 3)}px; flex: none;
  ${p => p.$on && css`background: #ece9d8; color: #000; border-right: 1px solid #555;`}
`;
const DocTitle = styled.div`margin-left: 7px; letter-spacing: ${p => p.$ls || 0}px; font-weight: ${p => (p.$b ? 700 : 400)}; flex: 1;`;
const TabClose = styled.div`width: 12px; height: 12px; margin-right: 4px; background: #88867a; display: grid; place-items: center;`;
const AlarmBar = styled.div`height: 39px; flex: none; display: flex; align-items: center; padding: 4px 0 0 10px; margin: 0 1px;`;
const Checkbox = styled.div`width: 13px; height: 13px; flex: none; border: 1px solid #1d5280; background: linear-gradient(135deg, #dcdcd6, #fff);`;
const Link = styled.a`color: #0000ff; text-decoration: underline; margin-left: ${p => p.$ml}px; padding-top: 2px;`;
const Rule = styled.div`height: 2px; flex: none; background: #000; margin: 0 1px;`;
const BlockTabs = styled.div`height: 20px; flex: none; display: flex; align-items: flex-end; padding-left: 3px;`;
const BlockTab = styled.div`
  width: ${p => p.$w}px; height: 17px; margin-right: ${p => p.$mr ?? 1}px; border: 1px solid #919b9c; border-bottom: 0; border-radius: 3px 3px 0 0;
  background: linear-gradient(#fff, #f0f0ea 70%, #e2e0d6); display: grid; place-items: center; letter-spacing: ${p => p.$ls ?? -.3}px; padding-top: 2px;
  ${p => p.$on && css`height: 20px; margin-bottom: -1px; z-index: 1; background: #fcfcfe; border-top: 3px solid #f8b030; padding: 0 0 4px;`}
`;
const Panel = styled.div`height: 372px; flex: none; margin: 0 3px 0 1px; border: 1px solid #919b9c; background: #fcfcfe; box-shadow: 1px 1px #c8c6b8;`;
const Options = styled.div`height: 69px; display: flex;`;
const OptLeft = styled.div`width: 458px; padding-left: 3px;`;
const Line = styled.div`display: flex; align-items: center; height: ${p => p.$h}px; padding-left: ${p => p.$pl || 0}px;`;
const Radio = styled.div`
  width: 13px; height: 13px; flex: none; border-radius: 50%; border: 1px solid #1d5280; background: linear-gradient(135deg, #dcdcd6, #fff); display: grid; place-items: center;
  &::after { content: ""; width: 5px; height: 5px; border-radius: 50%; background: ${p => (p.$on ? "#21a121" : "transparent")}; }
`;
const JumpBtn = styled.div`width: 58px; height: 20px; margin-left: 3px; border: 1px solid #003c74; border-radius: 3px; background: linear-gradient(#fff, #f0f0ea 80%, #dcd8cc); display: grid; place-items: center;`;
const Fieldset = styled.div`width: 339px; height: 54px; margin-top: 10px; border: 1px solid #d0d0bf; border-radius: 4px;`;
const Legend = styled.div`display: flex; align-items: center; gap: 4px; height: 14px; margin: -6px 0 0 9px; width: 177px; background: #fcfcfe;`;
const FieldBody = styled.div`display: flex; padding: 5px 0 0 26px; align-items: flex-start;`;
const Spin = styled.div`width: 35px; height: 20px; margin: 4px 0 0 13px; border: 1px solid #9fb4c8; background: #ece9d8; color: #a8a698; display: flex; justify-content: space-between; padding: 1px 1px 1px 2px; line-height: 16px;`;
const SpinBtns = styled.div`width: 14px; background: #f2f1e8; border: 1px solid #d8d6c8; display: grid; place-items: center;`;
const PadBtn = styled.div`width: 17px; height: 19px; margin: 5px 7px 0 1px; border: 1px solid #c8c6ba; border-radius: 3px; background: #f0eee4; display: grid; place-items: center;`;
const TableArea = styled.div`width: 797px; height: 299px; margin-left: 3px; display: grid; grid-template: 282px 17px / 780px 17px;`;
const Grid = styled.div`overflow: hidden; border: 1px solid #aca899; border-width: 1px 0 0 1px; background: #fff;`;
const Row = styled.div`display: grid; grid-template-columns: 50px 150px 70px 280px 50px 100px 100px; height: ${p => p.$h || 20}px;`;
const Cell = styled.div`
  display: flex; align-items: center; justify-content: ${p => (p.$left ? "flex-start" : "center")}; overflow: hidden;
  padding: ${p => p.$pad || "1px 0 0"}; letter-spacing: ${p => p.$ls || 0}px;
  border: solid ${p => (p.$head ? "#aca899" : "#ece9d8")}; border-width: 0 1px 1px 0; background: ${p => (p.$head ? "#ece9d8" : p.$gray ? "#e6e6e6" : "#fff")};
`;
const HScrollLeft = styled.div`display: flex; align-items: center;`;
const rows = [
  ["26", "[PLC1]D1210.4", "S7-LS40-铜球移位出异常", -.1], ["27", "[PLC1]D1210.5", "S7-LS38-铜球上下出异常", -.1],
  ["28", "[PLC1]D1213.1", "S10锁付超时", -.4], ["29", "[PLC1]D1213.2", "S10锁付失败", -.4], ["30", "[PLC1]D1213.3", "S10锁付伺服异常", -.4],
  ["31", "[PLC1]D1214.1", "S11退料夾取失败", -.3], ["32", "[PLC1]D1215.F", "手动转盘动作执行"],
  ["33"], ["34"], ["35"], ["36"], ["37"], ["38"], [""],
];
const screens = [
  ["B0001", "主畫面"], ["B0100", "手動選擇頁"], ["B0101", "密封墊站", 1], ["B0102", "閥桿站"], ["B0103", "密封圈站"], ["B0104", "閥桿校正/銅球/噴油/點膠站"],
  ["B0105", "閥蓋預鎖站"], ["B0106", "閥蓋鎖付/退料站"], ["B0200", "參數設定畫面"], ["B0300", "警報畫面"],
];

/* ---------- right ---------- */
const PropTable = styled.div`height: 344px; flex: none; margin-top: 4px; border: 1px solid #7f9db9; background: #fff;`;
const PropHead = styled.div`display: flex; height: 17px; background: #ffffe0; border-bottom: 1px solid #aca899; margin-right: 1px; border-right: 1px solid #aca899;`;
const PropCell = styled.div`padding: 1px 0 0 3px; width: ${p => p.$w}px; border-right: ${p => (p.$line ? "1px solid #aca899" : 0)};`;

/* ---------- bottom ---------- */
const CheckRow = styled.div`height: 24px; flex: none; display: flex; background: #fffce8;`;
const CheckSlot = styled.div`width: 89px; background: #ece9d8; padding: 2px 0 0 2px;`;
const CheckTab = styled.div`width: 80px; height: 22px; border: 1px solid #8c8a7e; border-bottom: 0; display: flex; align-items: center; gap: 7px; padding-left: 3px; color: #55534a;`;
const FRow = styled.div`height: 26px; flex: none; display: flex; align-items: center; padding-left: 5px;`;
const FItem = styled.div`width: 106px; display: flex; align-items: center; gap: 3px;`;
const FBox = styled.div`
  height: 16px; width: ${p => p.$w}px; border: 1px solid #807e74; color: #77756a; text-align: center; line-height: 15px; background: ${p => (p.$on ? "#fafaf4" : "transparent")};
`;
const Status = styled.div`height: 23px; flex: none; border-top: 2px solid #aca899; background: linear-gradient(#e0ddcc, #f1eee0 4px, #ece9d8 17px, #e0dccb); display: flex; align-items: center; justify-content: flex-end; padding-right: 12px;`;
const Model = styled.div`border-left: 1px solid #bbb8a8; height: 17px; padding: 2px 0 0 4px; letter-spacing: -.55px;`;
const Taskbar = styled.footer`
  height: 30px; flex: none; display: flex; align-items: center; color: #fff; font-family: ${serif};
  background: linear-gradient(#1c48b0 0, #4a90f4 2px, #2a68e0 5px, #245edb 12px, #2660de 24px, #1941a5 30px);
`;
const Start = styled.div`
  width: 91px; height: 30px; display: flex; align-items: center; padding-left: 10px; gap: 5px; font: italic 16px/20px ${sans}; text-shadow: 1px 1px 1px #143c10;
  border-radius: 0 10px 10px 0; background: linear-gradient(#2c6a2c 0, #66b266 2px, #3f9a3f 6px, #388e38 20px, #2a702a 30px); box-shadow: 2px 0 3px #123a90;
`;
const Quick = styled.div`display: flex; gap: 7px; margin-left: 12px; width: 160px;`;
const More = styled.div`width: 16px; align-self: flex-start; padding-top: 1px; font: 14px/16px ${sans}; color: #bcd4ff;`;
const Task = styled.div`
  width: 158px; height: 24px; margin-right: 2px; padding-left: 10px; border-radius: 2px; display: flex; align-items: center; gap: 4px; margin-top: 2px;
  background: ${p => (p.$on ? "linear-gradient(#153e96, #1e50b8 5px, #1d4eb4)" : "linear-gradient(#5a9af8, #3c81f0 4px, #3a7cee 19px, #2c68dc)")};
  box-shadow: inset 0 0 1px #12348c;
`;
const Tray = styled.div`
  height: 30px; flex: 1; display: flex; align-items: center; gap: 2px; padding-left: 10px; border-left: 1px solid #0a3c98;
  background: linear-gradient(#0c59b9 0, #28c0ff 1px, #169af0 5px, #1290e8 20px, #0c68c0 30px);
`;
const TrayToggle = styled.div`
  width: 17px; height: 17px; margin: 0 -9px 0 4px; z-index: 1; border-radius: 50%; background: radial-gradient(circle at 30% 30%, #70c8ff, #1070d8); border: 1px solid #a8dcff; display: grid; place-items: center;
`;
const HiddenDefs = styled.svg`position: absolute;`;

const DocClose = () => (
  <TabClose><Svg width="8" height="8" viewBox="0 0 8 8"><path d="M1 1l6 6M7 1L1 7" stroke="#fff" strokeWidth="1.800" /></Svg></TabClose>
);

function LeftDock() {
  return (
    <Dock $w={246} $p="4px 1px 0 1px">
      <DockHead><Txt>畫面清單</Txt><Spacer /><Pin /><Spacer $w={6} /><Close /></DockHead>
      <WhiteBar $h={28}><FieldLabel>畫面型式</FieldLabel><Select $w={136}>所有<Btn><Arrow /></Btn></Select></WhiteBar>
      <WhiteBar $h={27}><FieldLabel>搜尋方式</FieldLabel><Select $w={136}>標題<Btn><Arrow /></Btn></Select></WhiteBar>
      <WhiteBar $h={29}><FieldLabel>細部搜尋</FieldLabel><Input $w={86} $h={20} $mt={4} /><GrayBtn>搜尋</GrayBtn></WhiteBar>
      <WhiteBar $h={29} $pl={3}>
        <DockTools $g={7}><Icon n="screen" /><Icon n="copyb" /><Icon n="pasteg" /><Icon n="xb" s={15} /></DockTools>
        <Sep /><Spacer $w={9} />
        <DockTools $g={7}><Icon n="pc" /><Icon n="recipe" /><Icon n="link" /></DockTools>
      </WhiteBar>
      <ListBox>
        <ListRows>
          <ListRow><Txt $ml={-2}>畫面</Txt></ListRow>
          {screens.map(([c, t, on]) => (
            <ListRow key={c} $on={on}><Code>{c}</Code><Txt $ls={t.length > 10 ? .2 : t.length > 7 ? .3 : .1}>({t})</Txt></ListRow>
          ))}
        </ListRows>
        <VBar>
          <div><Btn $out $w={15} $h={16}><Arrow r={180} /></Btn><Thumb $v $w={15} $h={94} $m="1px 0 0" /></div>
          <Btn $out $w={15} $h={16}><Arrow /></Btn>
        </VBar>
        <HBar><Btn $out $h={15}><Arrow r={90} /></Btn><Thumb $w={134} $h={15} $m="0 0 0 -3px" /><Btn $out $h={15}><Arrow r={-90} /></Btn></HBar>
      </ListBox>
      <DockTabs>
        <DockTab $w={42} $pl={7}><Icon n="camera" />系</DockTab><TabLine />
        <DockTab $w={38} $pl={3}><Icon n="gridg" />位</DockTab><TabLine />
        <DockTab $w={38} $pl={3}><Icon n="colors" s={15} />顏</DockTab><TabLine />
        <DockTab $w={38} $pl={3}><Icon n="search" />搜</DockTab><TabLine />
        <DockTab $w={39} $pl={4}><Icon n="redbox" />共</DockTab>
        <DockTab $w={39} $pl={3}  $on><Icon n="tiles" s={15} />畫</DockTab>
      </DockTabs>
    </Dock>
  );
}

function CenterPane() {
  const blocks = [["共用", 41, 1, 0, 0], ["Block1", 43, 0], ["Block2", 47, 1, 1], ["Block3", 43], ["Block4", 44], ["Block5", 44], ["Block6", 44], ["Block7", 44], ["Block8", 44], ["移動訊息", 58, 1, 0, 0]];
  return (
    <Center>
      <DocTabs>
        <Spacer $w={3} />
        <DocTab $w={132}><Icon n="dispg" /><DocTitle $ls={.1}>基本 1(主畫面)</DocTitle><DocClose /></DocTab><TabLine />
        <DocTab $w={189}><Icon n="disp" /><DocTitle $ls={.2}>基本 403(時間設定畫面4)</DocTitle><DocClose /></DocTab><TabLine />
        <DocTab $w={189}><Icon n="disp" /><DocTitle $ls={.2}>基本 402(時間設定畫面3)</DocTitle><DocClose /></DocTab>
        <DocTab $w={79} $on><Icon n="alarmc" /><DocTitle $b $ls={1}>警報</DocTitle><DocClose /></DocTab>
        <Spacer />
        <Svg width="18" height="9" viewBox="0 0 18 9"><path d="M4.500.5v8L.5 4.500zM13.500.5v8l4-4z" fill="none" stroke="#888" /></Svg><Spacer $w={5} />
      </DocTabs>
      <AlarmBar>
        <Txt>警報</Txt><Spacer $w={124} /><Checkbox /><Txt $ml={4}>允許多國語言表</Txt><Txt $ml={69}>語言</Txt>
        <Spacer $w={54} /><Select $w={136}><Txt $ls={-.4}>Chinese(Simplified)</Txt><Btn><Arrow /></Btn></Select>
        <Link $ml={146}>匯出</Link><Link $ml={39}>匯入</Link>
      </AlarmBar>
      <Rule />
      <BlockTabs>{blocks.map(([t, w, mr, on, ls]) => <BlockTab key={t} $w={w} $mr={mr} $on={on} $ls={ls}>{t}</BlockTab>)}</BlockTabs>
      <Panel>
        <Options>
          <OptLeft>
            <Line $h={39}><Radio $on /><Txt $ml={4}>Bit 監控</Txt><Spacer $w={45} /><Radio /><Txt $ml={4} $ls={-.3}>Word 監控</Txt></Line>
            <Line $h={19} $pl={3}>
              <Input $w={50} /><JumpBtn>跳至</JumpBtn><Link $ml={17}>自動配置...</Link><Txt $ml={49}>歷史</Txt><Txt $ml={54}>記錄</Txt>
              <Spacer $w={28} />
              <Svg width="15" height="12" viewBox="0 0 15 12"><path d="M1 6l4 4L13 1" fill="none" stroke="#2868e0" strokeWidth="2.600" /></Svg>
              <Txt $ml={4}>動作</Txt>
            </Line>
          </OptLeft>
          <Fieldset>
            <Legend><Checkbox />從每一個警報讀取資料</Legend>
            <FieldBody>
              <Txt $c="#666">位址個數</Txt>
              <Spin>1<SpinBtns><Svg width="8" height="12" viewBox="0 0 8 12"><path d="M1 4l3-3 3 3zM1 8l3 3 3-3z" fill="#c0beb0" /></Svg></SpinBtns></Spin>
              <PadBtn><Icon n="grid" s={12} /></PadBtn><Input $w={184} $h={35} />
            </FieldBody>
          </Fieldset>
        </Options>
        <TableArea>
          <Grid>
            <Row>{["號碼", "Bit 位址", "觸發條件", "訊息", "層級", "說明顯示畫面號碼", "位址1"].map(h => <Cell $head key={h}>{h}</Cell>)}</Row>
            {rows.map(([n, a, m, ls], i) => (
              <Row key={n} $h={i ? 20 : 18}>
                <Cell $head>{n}</Cell><Cell $left $pad="1px 0 0 3px" $ls={-.75}>{a}</Cell><Cell $ls={-.8}>{m && "ON"}</Cell>
                <Cell $left $pad="0 0 7px" $ls={ls}>{m}</Cell>
                <Cell>{m && "0"}</Cell><Cell>{m && "0"}</Cell><Cell $gray />
              </Row>
            ))}
          </Grid>
          <VBar>
            <div><Btn $out $w={15} $h={16}><Arrow r={180} /></Btn><Thumb $v $plain $w={15} $h={8} $m="1px 0 0" /></div>
            <Btn $out $w={15} $h={16}><Arrow /></Btn>
          </VBar>
          <HBar>
            <HScrollLeft><Btn $out><Arrow r={90} /></Btn><Thumb $w={387} $h={16} $m="0 0 0 1px" /></HScrollLeft>
            <Btn $out><Arrow r={-90} /></Btn>
          </HBar>
        </TableArea>
      </Panel>
    </Center>
  );
}

function RightDock() {
  return (
    <Dock $w={216} $p="4px 0 0 1px">
      <DockHead><Txt>屬性</Txt><Spacer /><Pin /><Spacer $w={6} /><Close /></DockHead>
      <WhiteBar $h={28} /><WhiteBar $h={28} $pl={2}><DockTools $g={7}><Icon n="plus" /><Icon n="minus" /><Icon n="one" /></DockTools></WhiteBar>
      <PropTable><PropHead><PropCell $w={130} $line>屬性名稱</PropCell><PropCell>數值</PropCell></PropHead></PropTable>
      <DockTabs>
        <Spacer $w={4} />
        <DockTab $w={51} $pl={4} $g={3} $on><Icon n="prop" />屬性</DockTab>
        <DockTab $w={94} $pl={4} $g={4}><Icon n="parts" /><Txt>Parts 工具箱</Txt></DockTab><TabLine />
      </DockTabs>
    </Dock>
  );
}

export default function App() {
  const fk = ["使用手冊", "", "", "", "", "", "", "", "", "選單", "整個畫面", "模擬"];
  return (
    <Screen>
      <Global />
      <HiddenDefs width="0" height="0">
        <defs><linearGradient id="glass" x1="0" y1="0" x2="1" y2="1"><stop offset="0" stopColor="#18283c" /><stop offset=".5" stopColor="#70a8d8" /><stop offset="1" stopColor="#1c3450" /></linearGradient></defs>
      </HiddenDefs>
      <TitleBar>
        <Icon n="hp" /><Txt $b $ml={5} $ls={.71}>GP-Pro EX - D:\工作資料\進行中工作\11-401_12站球閥半自動組立機\HMI\11-401.prx</Txt><Spacer />
        <WinBtn><Svg width="11" height="11" viewBox="0 0 11 11"><path d="M1 9h6" stroke="#fff" strokeWidth="3" /></Svg></WinBtn>
        <WinBtn><Svg width="11" height="11" viewBox="0 0 11 11"><path d="M3 4V1h7v6H8M1 4.500h6V10H1zM1 5h6M3 1.500h7" fill="none" stroke="#fff" strokeWidth="1.300" /></Svg></WinBtn>
        <WinBtn $red><Svg width="11" height="11" viewBox="0 0 11 11"><path d="M1 1l9 9M10 1l-9 9" stroke="#fff" strokeWidth="2.200" /></Svg></WinBtn>
      </TitleBar>
      <MenuBar>{menus.map(([t, k]) => <span key={t}>{t} (<u>{k}</u>)</span>)}</MenuBar>
      <ModeBar>
        {modes.map(([a, t, on], i) => (
          <React.Fragment key={a}>
            {i > 0 && <Chevrons><Svg width="16" height="9" viewBox="0 0 16 9"><path d="M0 .5h3l5 4-5 4H0l4-4zM8 .5h3l5 4-5 4H8l4-4z" fill="#2424dc" /></Svg></Chevrons>}
            <ModeButton $on={on}><Svg width="31" height="28" viewBox="0 0 31 28" fill="none">{MODE_ART[a]}</Svg><ModeLabel>{t}</ModeLabel></ModeButton>
          </React.Fragment>
        ))}
      </ModeBar>
      <ToolRow $h={25}>
        <Grip />{tools("new open save | print preview | screen screenopen | prev next | undo redo | cut copy paste move x | allcheck |")}
        <Combo $w={120} $ml={2}><Txt $ls={-.9}>100%</Txt><ComboArrow /></Combo><Tool><Icon n="window" /></Tool><Spacer $w={6} /><Grip $a={7} />
        {tools("cube | group ungroup | front forward backward back | alignL alignR alignT alignB alignC alignM alignA | rotR rotL flipH flipV | swap")}
      </ToolRow>
      <ToolRow>
        <Grip />{tools("arrow | A | dot line poly rect pent ell arc scale image layout | table")}<Spacer $w={8} /><Grip />
        {tools("lamp v bulb v panel | n123 v | keypad shape3 v | bars v graph v graph2 v dia1 dia2 | alarm doc abc v | win2 film grp monitor box3 | send text | hand ds")}
      </ToolRow>
      <ToolRow>
        <Grip /><Combo $w={119}><Txt $ls={-.55}>State 1 (ON)</Txt><ComboArrow /></Combo><Combo $w={120} $ml={2}><Txt $ml={3} $ls={-.3}>3: Table 3</Txt><ComboArrow /></Combo>
        <Spacer $w={1} />{tools("| id ad tc w | fmt1 fmt2 |")}
        <Combo $w={119} $ml={2}><Txt $ls={-.9}>4 ) 16 X 16</Txt><ComboArrow /></Combo>{tools("frame frame2")}
      </ToolRow>
      <Main><LeftDock /><CenterPane /><RightDock /></Main>
      <CheckRow><CheckSlot><CheckTab><Icon n="chk" />檢查錯誤</CheckTab></CheckSlot></CheckRow>
      <FRow>{fk.map((t, i) => <FItem key={i}><FBox $w={i > 8 ? 27 : 20} $on={!!t}>F{i + 1}</FBox>{t}</FItem>)}</FRow>
      <Status><Model>AST-3301B</Model></Status>
      <Taskbar>
        <Start>
          <Svg width="19" height="18" viewBox="0 0 19 18"><path d="M3 2c3-1 4-1 6 0L7 9C5 8 4 8 1 9z" fill="#f05828" /><path d="M10 2c2 1 4 1 7 0l-2 7c-3 1-5 1-7 0z" fill="#78c838" /><path d="M1 10c3-1 4-1 6 0l-2 7c-2-1-4-1-6 0z" fill="#4890f0" /><path d="M8 10c2 1 4 1 7 0l-2 7c-3 1-5 1-7 0z" fill="#f8d030" /></Svg>開始
        </Start>
        <Quick>{["ie", "excel", "gp", "cad", "hp", "calc"].map(n => <Icon key={n} n={n} />)}</Quick>
        <More>»</More>
        <Task $on><Icon n="hp" /><Txt $ls={-.1}>GP-Pro EX - D:\工作...</Txt></Task>
        <Task><Icon n="msn" /><Txt $ml={1} $ls={-.35}>Windows Live Messen...</Txt></Task>
        <Task><Icon n="pics" />我的圖片</Task>
        <Task><Icon n="paint" />不良提示2 - 小畫家</Task>
        <Spacer $w={90} /><Icon n="kbd" s={15} />
        <TrayToggle><Svg width="8" height="8" viewBox="0 0 8 8"><path d="M5.500 1l-3 3 3 3" fill="none" stroke="#fff" strokeWidth="1.800" /></Svg></TrayToggle>
        <Tray>{["net", "user", "netx", "netx", "bt", "avast", "usb", "bird", "mon2"].map((n, i) => <Icon key={i} n={n} />)}<Txt $ml={5} $ls={-.1}>上午 09:29</Txt></Tray>
      </Taskbar>
    </Screen>
  );
}
